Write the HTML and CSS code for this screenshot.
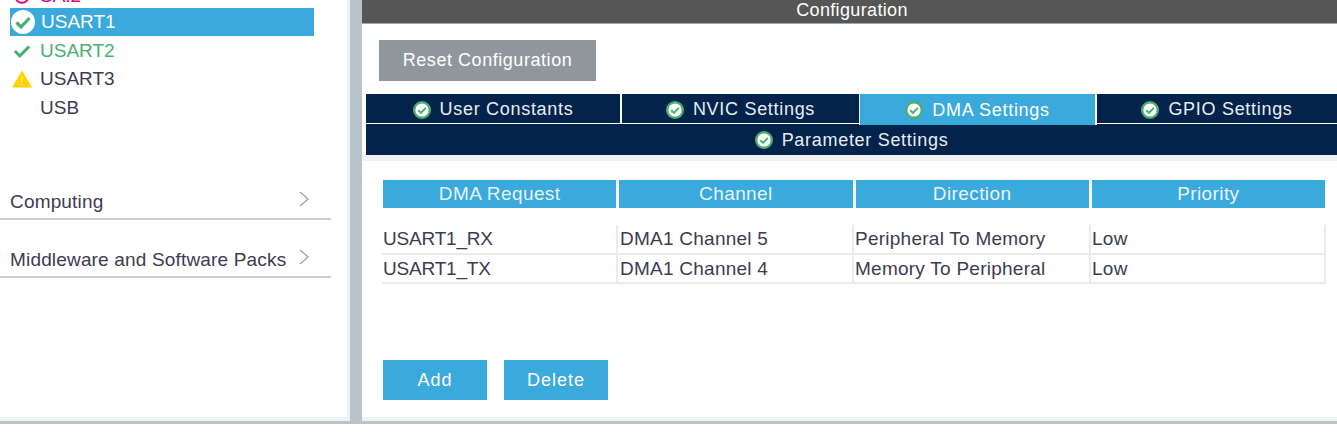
FILE: index.html
```html
<!DOCTYPE html>
<html lang="en">
<head>
    <meta charset="UTF-8">
    <meta name="viewport" content="width=device-width, initial-scale=1.0">
    <title>Configuration</title>
    <link rel="stylesheet" href="styles.css">
</head>
<body>

    <div class="app">
        <aside class="sidebar">
            <ul class="periph-list">
                <li class="periph periph-pink">
                    <svg class="periph-icon" viewBox="0 0 20 20"><circle cx="10" cy="10" r="7.5" fill="none" stroke="#e6007e" stroke-width="2"/></svg>
                    <span>SAI2</span>
                </li>
                <li class="periph periph-selected">
                    <svg class="periph-icon" viewBox="0 0 24 24"><circle cx="12" cy="12" r="12" fill="#fff"/><path d="M5.5 12.5l4.5 4.5 8.5-9" fill="none" stroke="#49b170" stroke-width="3.2"/></svg>
                    <span>USART1</span>
                </li>
                <li class="periph periph-green">
                    <svg class="periph-icon" viewBox="0 0 20 20"><path d="M2 10l5.5 5.5L18 5" fill="none" stroke="#49b170" stroke-width="3.4"/></svg>
                    <span>USART2</span>
                </li>
                <li class="periph">
                    <svg class="periph-icon" viewBox="0 0 20 18"><path d="M10 0.5L20 17.5H0z" fill="#ffd200"/><path d="M10 6.5v6M10 14v1.6" stroke="#fff3b0" stroke-width="1.2"/></svg>
                    <span>USART3</span>
                </li>
                <li class="periph">
                    <span class="periph-icon"></span>
                    <span>USB</span>
                </li>
            </ul>

            <div class="category category-first">
                <span>Computing</span>
                <svg class="chevron" viewBox="0 0 10 16"><path d="M1 1l8 7-8 7" fill="none" stroke="#a0a4a7" stroke-width="1.3"/></svg>
            </div>
            <div class="category">
                <span>Middleware and Software Packs</span>
                <svg class="chevron" viewBox="0 0 10 16"><path d="M1 1l8 7-8 7" fill="none" stroke="#a0a4a7" stroke-width="1.3"/></svg>
            </div>
        </aside>

        <div class="divider"></div>

        <main class="main">
            <div class="main-title">Configuration</div>

            <div class="reset-row">
                <button class="btn-reset">Reset Configuration</button>
            </div>

            <div class="tabs">
                <div class="tab-row">
                    <div class="tab">
                        <svg class="tab-icon" viewBox="0 0 18 18"><circle cx="9" cy="9" r="9" fill="#49b170"/><circle cx="9" cy="9" r="6.6" fill="#fff"/><path d="M5.2 9.2l2.8 2.7 4.8-5" fill="none" stroke="#49b170" stroke-width="2"/></svg>
                        User Constants
                    </div>
                    <div class="tab">
                        <svg class="tab-icon" viewBox="0 0 18 18"><circle cx="9" cy="9" r="9" fill="#49b170"/><circle cx="9" cy="9" r="6.6" fill="#fff"/><path d="M5.2 9.2l2.8 2.7 4.8-5" fill="none" stroke="#49b170" stroke-width="2"/></svg>
                        NVIC Settings
                    </div>
                    <div class="tab tab-active">
                        <svg class="tab-icon" viewBox="0 0 18 18"><circle cx="9" cy="9" r="9" fill="#49b170"/><circle cx="9" cy="9" r="6.6" fill="#fff"/><path d="M5.2 9.2l2.8 2.7 4.8-5" fill="none" stroke="#49b170" stroke-width="2"/></svg>
                        DMA Settings
                    </div>
                    <div class="tab">
                        <svg class="tab-icon" viewBox="0 0 18 18"><circle cx="9" cy="9" r="9" fill="#49b170"/><circle cx="9" cy="9" r="6.6" fill="#fff"/><path d="M5.2 9.2l2.8 2.7 4.8-5" fill="none" stroke="#49b170" stroke-width="2"/></svg>
                        GPIO Settings
                    </div>
                </div>
                <div class="tab-row-wide">
                    <svg class="tab-icon" viewBox="0 0 18 18"><circle cx="9" cy="9" r="9" fill="#49b170"/><circle cx="9" cy="9" r="6.6" fill="#fff"/><path d="M5.2 9.2l2.8 2.7 4.8-5" fill="none" stroke="#49b170" stroke-width="2"/></svg>
                    Parameter Settings
                </div>
            </div>
            <div class="tabs-shadow"></div>

            <div class="panel">
                <div class="dma-head">
                    <div>DMA Request</div>
                    <div>Channel</div>
                    <div>Direction</div>
                    <div>Priority</div>
                </div>
                <div class="dma-rows">
                    <div class="dma-row">
                        <div>USART1_RX</div>
                        <div>DMA1 Channel 5</div>
                        <div>Peripheral To Memory</div>
                        <div>Low</div>
                    </div>
                    <div class="dma-row">
                        <div>USART1_TX</div>
                        <div>DMA1 Channel 4</div>
                        <div>Memory To Peripheral</div>
                        <div>Low</div>
                    </div>
                </div>
                <div class="actions">
                    <button class="btn">Add</button>
                    <button class="btn">Delete</button>
                </div>
            </div>
        </main>
    </div>

    <div class="bottom-bar"></div>

</body>
</html>
```

FILE: styles.css
```css
* {
    box-sizing: border-box;
}
html, body {
    height: 100%;
}
body {
    margin: 0;
    background-color: #fff;
    font-family: "Liberation Sans", Arial, sans-serif;
    font-size: 18px;
    color: #3c3c50;
    overflow: hidden;
}
.app {
    display: flex;
    height: 421px;
}
.sidebar {
    width: 350px;
    flex: none;
    background-color: #fff;
    border-right: 3px solid #f0f1f3;
    border-bottom: 4px solid #f0f1f3;
    overflow: hidden;
}
.periph-list {
    list-style: none;
    margin: -21px 0 0 9.5px;
    padding: 0;
    width: 304.5px;
}
.periph {
    display: flex;
    align-items: center;
    height: 28.7px;
    padding-left: 2.5px;
    font-size: 19px;
}
.periph-icon {
    width: 20px;
    height: 18px;
    margin-right: 8px;
    flex: none;
}
.periph-pink {
    color: #e6007e;
    padding-top: 5px;
}
.periph-green {
    color: #49b170;
}
.periph-selected {
    background-color: #3aa9dc;
    color: #fff;
    padding-left: 1.5px;
}
.periph-selected .periph-icon {
    width: 24px;
    height: 24px;
    margin-right: 6px;
}
.category {
    display: flex;
    justify-content: space-between;
    align-items: center;
    width: 331px;
    height: 35px;
    padding: 0 22px 0 10px;
    margin-top: 23px;
    border-bottom: 2px solid #c9ced3;
    font-size: 19px;
    letter-spacing: 0.17px;
}
.category-first {
    margin-top: 63px;
}
.chevron {
    width: 10px;
    height: 16px;
    margin-top: -6px;
}
.divider {
    width: 12px;
    flex: none;
    background-color: #b9c4ca;
}
.main {
    flex: 1;
    min-width: 0;
    display: flex;
    flex-direction: column;
    border-bottom: 4px solid #f0f1f3;
}
.main-title {
    height: 24px;
    background-color: #555655;
    border-bottom: 1px solid #a5a8a8;
    color: #fff;
    text-align: center;
    line-height: 20px;
    padding-left: 5px;
    letter-spacing: 0.35px;
}
.reset-row {
    padding: 16px 0 13px 17px;
}
button {
    border: none;
    color: #fff;
    font-family: inherit;
    font-size: 18px;
    letter-spacing: 1px;
}
.btn-reset {
    display: block;
    width: 217px;
    height: 41px;
    background-color: #90979c;
    letter-spacing: 0.55px;
}
.tabs {
    margin-left: 4px;
    color: #e8eef2;
    letter-spacing: 0.7px;
}
.tabs-shadow {
    height: 6px;
    background-color: #f0f1f3;
}
.tab-row {
    display: flex;
    height: 30px;
    background-color: #fff;
}
.tab {
    display: flex;
    align-items: center;
    justify-content: center;
    height: 29px;
    width: 239px;
    padding-top: 2px;
    background-color: #03234b;
    border-left: 2px solid #fff;
}
.tab:first-child {
    width: 254px;
    border-left: none;
}
.tab:last-child {
    flex: 1;
    border-left: none;
}
.tab-active {
    width: 238px;
    height: 31px;
    padding-top: 1px;
    position: relative;
    background-color: #3aa9dc;
    color: #fff;
    border-left: 1px solid #fff;
    border-right: 2px solid #fff;
}
.tab-icon {
    width: 18px;
    height: 18px;
    margin-right: 9px;
    flex: none;
}
.tab-row-wide {
    display: flex;
    align-items: center;
    justify-content: center;
    height: 31px;
    padding-top: 1px;
    background-color: #03234b;
}
.panel {
    padding: 19px 12px 0 21px;
}
.dma-head {
    display: grid;
    grid-template-columns: repeat(4, 233.25px);
    column-gap: 3px;
    height: 28px;
    line-height: 28px;
    text-align: center;
    color: #e8f4fa;
    font-size: 19px;
    letter-spacing: 0.4px;
}
.dma-head div {
    background-color: #3aa9dc;
}
.dma-rows {
    margin-top: 17px;
    margin-left: -1px;
    width: 944px;
    border-right: 2px solid #e9ebef;
    font-size: 19px;
    letter-spacing: 0.25px;
}
.dma-row {
    display: grid;
    grid-template-columns: 236px 236px 237px 1fr;
    height: 29.5px;
    line-height: 28px;
    border-bottom: 2px solid #e9ebef;
}
.dma-row div {
    padding-left: 1px;
    border-right: 2px solid #e9ebef;
    white-space: nowrap;
}
.dma-row div:first-child {
    letter-spacing: -0.2px;
}
.dma-row div:nth-child(2) {
    padding-left: 2px;
}
.dma-row div:last-child {
    border-right: none;
}
.actions {
    display: flex;
    gap: 17px;
    margin-top: 76px;
}
.btn {
    width: 104px;
    height: 40px;
    background-color: #3aa9dc;
}
.bottom-bar {
    height: 3px;
    background-color: #b9c4ca;
}
```
